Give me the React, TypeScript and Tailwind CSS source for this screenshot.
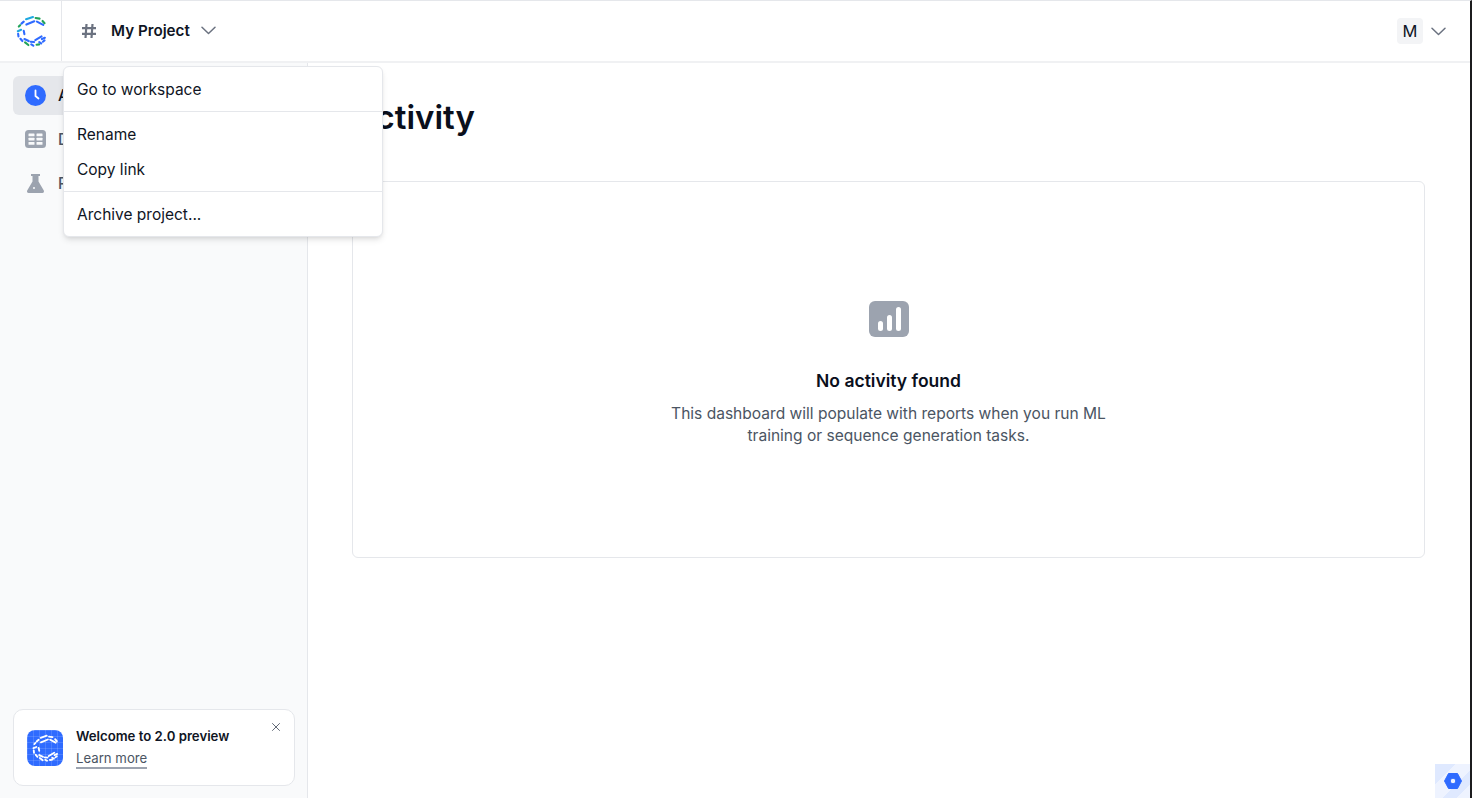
import React from "react";
import { X } from "lucide-react";

const B = "#2f6bff";
const G = "#22a35a";
const C = "#1fa8e0";
const dashes: [number, number, number, number, string][] = [
  [76, 56, 97, 49, C], [105, 52, 117, 54, G], [126, 61, 132, 68, G],
  [62, 69, 69, 63, B], [77, 72, 101, 62, B], [109, 63, 128, 73, B],
  [54, 78, 58, 74, G], [51, 92, 61, 88, C], [69, 91, 71, 101, B],
  [52, 100, 53, 108, B], [59, 115, 65, 122, B], [71, 116, 84, 122, B],
  [90, 124, 100, 125, B], [104, 119, 123, 108, B], [124, 116, 133, 112, B],
  [73, 126, 83, 134, G], [92, 132, 98, 136, B], [108, 133, 116, 132, G], [116, 125, 122, 129, B], [127, 124, 132, 120, B],
];

function Logo({ mono, size, sw }: { mono?: string; size: number; sw: number }) {
  return (
    <svg width={size} height={size} viewBox="44 43 94 97" fill="none">
      {dashes.map(([a, b, c, d, col], i) => (
        <line key={i} x1={a} y1={b} x2={c} y2={d} stroke={mono ?? col} strokeWidth={sw} strokeLinecap="round" />
      ))}
    </svg>
  );
}

function MenuItem({ label }: { label: string }) {
  return <div className="h-[35px] flex items-center px-[13px] text-[15.5px] text-[#0f1524]">{label}</div>;
}

function Chevron({ className }: { className: string }) {
  return (
    <svg className={className} width="15" height="9" viewBox="0 0 15 9" fill="none">
      <path d="M1 1.2l6.5 6.3L14 1.2" stroke="#6b7280" strokeWidth="1.5" strokeLinecap="round" strokeLinejoin="round" />
    </svg>
  );
}

export default function App() {
  return (
    <div className="relative h-[798px] w-[1472px] overflow-hidden bg-white flex flex-col border-t border-[#e5e7eb] border-r-2 border-r-[#1c1c1e]" style={{ fontFamily: "Inter, 'Liberation Sans', sans-serif" }}>
      <header className="h-[62px] shrink-0 flex items-center border-b-2 border-[#f0f1f3] pr-[24px]">
        <div className="w-[62px] h-full flex items-center justify-center border-r border-[#e5e7eb]">
          <Logo size={32} sw={6.4} />
        </div>
        <div className="flex items-center pl-[19px]">
          <svg width="16" height="16" viewBox="0 0 16 16" fill="none" stroke="#6b7280" strokeWidth="2.2">
            <path d="M5.5 1L4.5 15M11.5 1l-1 14M1 5.2h14M1 10.8h14" />
          </svg>
          <span className="ml-[14px] text-[15.2px] font-semibold text-[#0f1524]">My Project</span>
          <Chevron className="ml-[11px]" />
        </div>
        <div className="ml-auto flex items-center">
          <div className="h-[26px] w-[26px] rounded bg-[#f3f4f6] flex items-center justify-center text-[16.5px] text-[#0f1524]">M</div>
          <Chevron className="ml-[8px]" />
        </div>
      </header>

      <div className="flex flex-1 min-h-0">
        <aside className="w-[308px] shrink-0 bg-[#f9fafb] border-r border-[#e5e7eb] flex flex-col pl-[13px] pr-[12px] pt-[13px] pb-[12px]">
          <div className="h-[39px] rounded-md bg-[#e5e7eb] flex items-center pl-[12px] gap-[12px] text-[15.5px] font-medium text-[#0f1524]">
            <svg width="21" height="21" viewBox="0 0 21 21"><circle cx="10.5" cy="10.5" r="10.5" fill="#2f6bff" /><path d="M10.5 5.5v5.5l3 2.5" stroke="#fff" strokeWidth="1.8" fill="none" strokeLinecap="round" /></svg>
            Activity
          </div>
          <div className="mt-[5px] h-[39px] rounded-md flex items-center pl-[12px] gap-[12px] text-[15.5px] font-medium text-[#4b5563]">
            <svg width="21" height="21" viewBox="0 0 21 21"><rect y="1" width="21" height="18" rx="3.5" fill="#9ca3af" /><rect x="3.5" y="4.5" width="6" height="2.8" rx=".5" fill="#f9fafb" /><rect x="11.5" y="4.5" width="6" height="2.8" rx=".5" fill="#f9fafb" /><rect x="3.5" y="8.8" width="6" height="2.8" rx=".5" fill="#f9fafb" /><rect x="11.5" y="8.8" width="6" height="2.8" rx=".5" fill="#f9fafb" /><rect x="3.5" y="13" width="6" height="2.8" rx=".5" fill="#f9fafb" /><rect x="11.5" y="13" width="6" height="2.8" rx=".5" fill="#f9fafb" /></svg>
            Datasets
          </div>
          <div className="mt-[5px] h-[39px] rounded-md flex items-center pl-[12px] gap-[12px] text-[15.5px] font-medium text-[#4b5563]">
            <svg width="21" height="21" viewBox="0 0 21 21"><path fillRule="evenodd" fill="#9ca3af" d="M6 1h9v2h-1.5v5.5l5.3 9c.6 1.1-.1 2.5-1.4 2.5H3.6c-1.3 0-2-1.4-1.4-2.5l5.3-9V3H6zM9 14a1 1 0 1 0 0 2 1 1 0 0 0 0-2z" /></svg>
            Reports
          </div>
          <div className="mt-auto h-[77px] rounded-[10px] border border-[#e5e7eb] bg-white relative flex items-center pl-[13px]">
            <div className="relative h-[36px] w-[36px] rounded-[8px] bg-[#2f6bff] flex items-center justify-center bg-[linear-gradient(#ffffff22_1px,transparent_1px),linear-gradient(90deg,#ffffff22_1px,transparent_1px)] bg-[size:6px_6px]">
              <Logo size={28} sw={6.4} mono="#ffffff" />
            </div>
            <div className="ml-[13px]">
              <div className="text-[13.2px] font-semibold text-[#0f1524] leading-[18px]">Welcome to 2.0 preview</div>
              <div className="mt-[4px] text-[13.2px] text-[#4b5563] leading-[18px] border-b-2 border-[#9ca3af] w-fit">Learn more</div>
            </div>
            <X className="absolute right-[11px] top-[10px] text-[#4b5563]" size={14} strokeWidth={1.5} />
          </div>
        </aside>

        <main className="flex-1 pl-[44px] pr-[45px] pt-[34px]">
          <h1 className="text-[33px] font-semibold leading-[40px] text-[#0a0f1c]">Activity</h1>
          <section className="mt-[44px] h-[377px] rounded-md border border-[#e5e7eb] flex flex-col items-center pt-[119px]">
            <svg width="40" height="36" viewBox="0 0 40 36"><rect x="0" y="0" width="40" height="36" rx="6" fill="#9ca3af" /><rect x="9" y="20" width="5" height="10" rx="2.5" fill="#fff" /><rect x="18" y="14" width="5" height="16" rx="2.5" fill="#fff" /><rect x="27" y="6" width="5" height="24" rx="2.5" fill="#fff" /></svg>
            <div className="mt-[32px] text-[17.5px] font-semibold text-[#0a0f1c] leading-[24px]">No activity found</div>
            <p className="mt-[10px] w-[470px] text-center text-[15.55px] leading-[22px] text-[#4b5563]">This dashboard will populate with reports when you run ML training or sequence generation tasks.</p>
          </section>
        </main>
      </div>

      <div className="absolute left-[63px] top-[65px] w-[320px] h-[171px] rounded-md bg-white border border-[#e5e7eb] shadow-md pt-[5px]">
        <MenuItem label="Go to workspace" />
        <div className="mt-[4px] mb-[5px] h-px bg-[#e5e7eb]" />
        <MenuItem label="Rename" />
        <MenuItem label="Copy link" />
        <div className="mt-[4px] mb-[5px] h-px bg-[#e5e7eb]" />
        <MenuItem label="Archive project..." />
      </div>

      <div className="absolute left-[1435px] bottom-0 h-[34px] w-[35px] flex items-center justify-center bg-[linear-gradient(135deg,#dfe9ff_0%,#dfe9ff_30%,#eef3ff_30%,#eef3ff_60%,#dfe9ff_60%,#dfe9ff_80%,#eef3ff_80%)]">
        <svg width="20" height="18" viewBox="0 0 20 18"><path fillRule="evenodd" fill="#2f6bff" stroke="#2f6bff" strokeLinejoin="round" d="M5.5 1.5h9L18.5 9l-4 7.5h-9L1.5 9zM10 6.2a2.8 2.8 0 1 0 0 5.6 2.8 2.8 0 0 0 0-5.6z" /></svg>
      </div>
    </div>
  );
}
